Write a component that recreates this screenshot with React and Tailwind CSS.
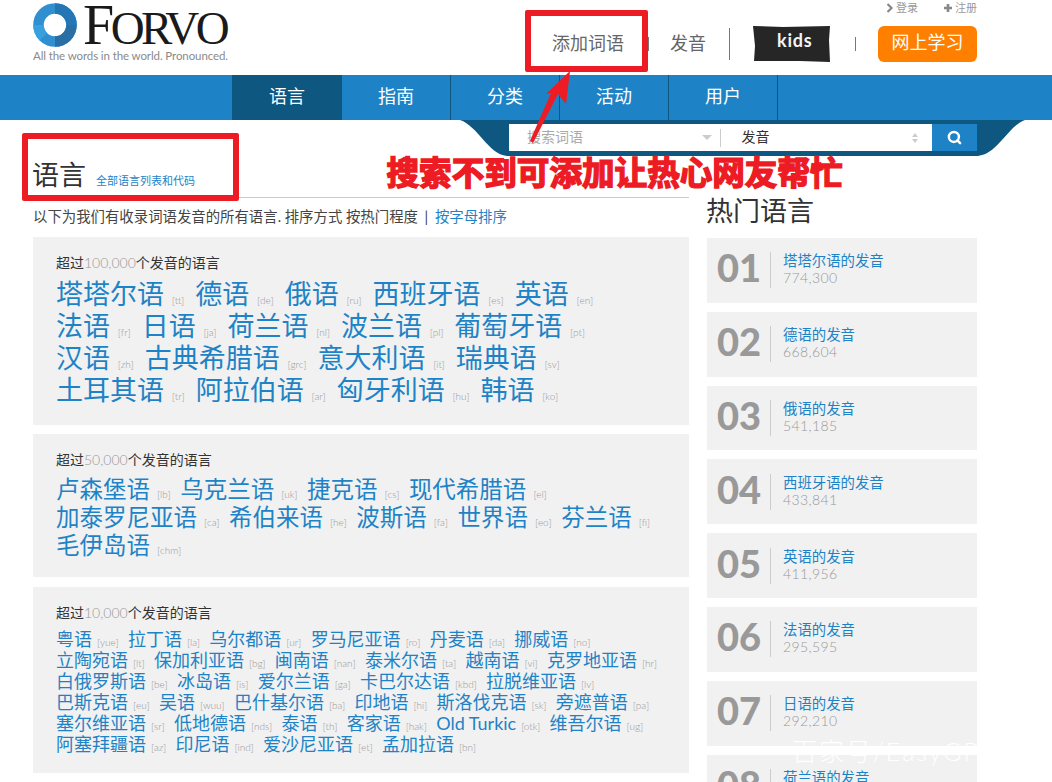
import { Search } from "lucide-react";

const font = "font-['Lato','Noto_Sans_CJK_SC',sans-serif]";

const navItems = ["语言", "指南", "分类", "活动", "用户"];

const bigRows = [
    [["塔塔尔语", "tt"], ["德语", "de"], ["俄语", "ru"], ["西班牙语", "es"], ["英语", "en"]],
    [["法语", "fr"], ["日语", "ja"], ["荷兰语", "nl"], ["波兰语", "pl"], ["葡萄牙语", "pt"]],
    [["汉语", "zh"], ["古典希腊语", "grc"], ["意大利语", "it"], ["瑞典语", "sv"]],
    [["土耳其语", "tr"], ["阿拉伯语", "ar"], ["匈牙利语", "hu"], ["韩语", "ko"]],
];

const midRows = [
    [["卢森堡语", "lb"], ["乌克兰语", "uk"], ["捷克语", "cs"], ["现代希腊语", "el"]],
    [["加泰罗尼亚语", "ca"], ["希伯来语", "he"], ["波斯语", "fa"], ["世界语", "eo"], ["芬兰语", "fi"]],
    [["毛伊岛语", "chm"]],
];

const smallRows = [
    [["粤语", "yue"], ["拉丁语", "la"], ["乌尔都语", "ur"], ["罗马尼亚语", "ro"], ["丹麦语", "da"], ["挪威语", "no"]],
    [["立陶宛语", "lt"], ["保加利亚语", "bg"], ["闽南语", "nan"], ["泰米尔语", "ta"], ["越南语", "vi"], ["克罗地亚语", "hr"]],
    [["白俄罗斯语", "be"], ["冰岛语", "is"], ["爱尔兰语", "ga"], ["卡巴尔达语", "kbd"], ["拉脱维亚语", "lv"]],
    [["巴斯克语", "eu"], ["吴语", "wuu"], ["巴什基尔语", "ba"], ["印地语", "hi"], ["斯洛伐克语", "sk"], ["旁遮普语", "pa"]],
    [["塞尔维亚语", "sr"], ["低地德语", "nds"], ["泰语", "th"], ["客家语", "hak"], ["Old Turkic", "otk"], ["维吾尔语", "ug"]],
    [["阿塞拜疆语", "az"], ["印尼语", "ind"], ["爱沙尼亚语", "et"], ["孟加拉语", "bn"]],
];

const popular = [
    ["01", "塔塔尔语的发音", "774,300"],
    ["02", "德语的发音", "668,604"],
    ["03", "俄语的发音", "541,185"],
    ["04", "西班牙语的发音", "433,841"],
    ["05", "英语的发音", "411,956"],
    ["06", "法语的发音", "295,595"],
    ["07", "日语的发音", "292,210"],
    ["08", "荷兰语的发音", "262,036"],
];

function LangPanel({ count, rows, textClass, rowClass, codeClass, gapClass, panelClass, listClass }) {
    return (
        <div className={`bg-[#f1f1f1] pl-[23px] ${panelClass}`}>
            <p className="text-[14px] leading-[20px] text-[#333]">
                超过<span className="font-light text-[#999]">{count}</span>个发音的语言
            </p>
            <div className={listClass}>
                {rows.map((row, i) => (
                    <div key={i} className={`flex items-baseline ${rowClass} ${gapClass}`}>
                        {row.map(([name, code]) => (
                            <span key={code} className="whitespace-nowrap">
                                <span className={`text-[#1e83c6] ${textClass}`}>{name}</span>
                                <span className={`font-light text-[#999] ${codeClass}`}>[{code}]</span>
                            </span>
                        ))}
                    </div>
                ))}
            </div>
        </div>
    );
}

function Logo() {
    return (
        <div className="pl-[33px] pt-[3px]">
            <div className="flex items-start">
                <svg width="44" height="44" viewBox="0 0 44 44">
                    <circle cx="22" cy="22" r="16.5" fill="none" stroke="#2f8fd0" strokeWidth="10.5" />
                    <path d="M22 5.5A16.5 16.5 0 0 1 38.5 22" fill="none" stroke="#2476b4" strokeWidth="10.5" />
                    <path d="M38.5 22A16.5 16.5 0 0 1 22 38.5" fill="none" stroke="#2a6ea6" strokeWidth="10.5" />
                    <path d="M10.3 33.7A16.5 16.5 0 0 1 5.5 22" fill="none" stroke="#39a0de" strokeWidth="10.5" />
                </svg>
                <div className="ml-[6px] flex h-[44px] items-baseline font-['Liberation_Serif',serif] leading-[44px] tracking-[-3.5px] text-[#1a1a1a]">
                    <span className="text-[56px]">F</span>
                    <span className="text-[47px]">ORVO</span>
                </div>
            </div>
            <p className="mt-[2px] text-[11.5px] leading-[14px] tracking-[-0.1px] text-[#8a8a8a]">All the words in the world. Pronounced.</p>
        </div>
    );
}

function Header() {
    return (
        <header className="flex h-[75px] justify-between">
            <Logo />
            <div className="flex flex-col items-end pr-[75px]">
                <div className="flex h-[25px] items-start gap-[25px] pt-[1px] text-[11px] leading-[14px] text-[#999]">
                    <span className="flex items-center gap-[2px]">
                        <svg width="8" height="10" viewBox="0 0 8 10"><path d="M1.5 1l4 4-4 4" fill="none" stroke="#888" strokeWidth="2.2" /></svg>
                        登录
                    </span>
                    <span className="flex items-center gap-[2px]">
                        <svg width="10" height="10" viewBox="0 0 10 10"><path d="M5 1v8M1 5h8" fill="none" stroke="#888" strokeWidth="2.6" /></svg>
                        注册
                    </span>
                </div>
                <div className="flex items-center text-[18px] text-[#666]">
                    <span className="mb-[2px]">添加词语</span>
                    <span className="ml-[24px] h-[14px] w-px bg-[#777]" />
                    <span className="mb-[2px] ml-[21px]">发音</span>
                    <span className="ml-[23px] h-[32px] w-px bg-[#777]" />
                    <svg className="ml-[22px]" width="79" height="38" viewBox="0 0 79 38">
                        <path d="M1 1l30 1 47-1-1 14 1 22-30-1-46 0 1-15z" fill="#262626" />
                        <text x="25" y="22" fill="#f4f4f4" fontSize="18" fontWeight="700" fontFamily="Lato,sans-serif" letterSpacing="0.8">kids</text>
                    </svg>
                    <span className="ml-[24px] h-[14px] w-px bg-[#777]" />
                    <span className="ml-[22px] flex h-[36px] w-[99px] items-center justify-center rounded-[6px] bg-[#ff8000] pb-[3px] text-white">网上学习</span>
                </div>
            </div>
        </header>
    );
}

function Nav() {
    return (
        <nav className="relative flex h-[45px] bg-[#1e83c6] pl-[232px]">
            {navItems.map((item, i) => (
                <div key={item} className={`flex items-center justify-center pb-[2px] text-[18px] text-white ${i === 0 ? "w-[110px] bg-[#0d5781]" : "w-[109px] border-r border-[#0d5781]"}`}>
                    {item}
                </div>
            ))}
            <div className="absolute right-[27px] top-full h-[36px] w-[565px]">
                <svg className="absolute inset-0" width="565" height="36" viewBox="0 0 565 36">
                    <path d="M0 0H565C548 6 538 34 518 36H47C28 34 18 6 0 0Z" fill="#0d5781" />
                </svg>
                <div className="absolute left-[49px] top-[4px] flex h-[27px] w-[468px] items-center bg-white text-[14px]">
                    <div className="flex h-[27px] w-[211px] items-center justify-between pb-[3px] pl-[18px] pr-[8px] text-[#aaa]">
                        搜索词语
                        <span className="mt-[3px] h-0 w-0 border-x-[5px] border-t-[5px] border-x-transparent border-t-[#ccc]" />
                    </div>
                    <span className="h-[18px] w-px bg-[#ccc]" />
                    <div className="flex h-[27px] w-[212px] items-center justify-between pb-[3px] pl-[21px] pr-[14px] text-[#333]">
                        发音
                        <span className="mt-[3px] flex flex-col gap-[2px]">
                            <span className="h-0 w-0 border-x-[3px] border-b-[4px] border-x-transparent border-b-[#ccc]" />
                            <span className="h-0 w-0 border-x-[3px] border-t-[4px] border-x-transparent border-t-[#ccc]" />
                        </span>
                    </div>
                    <div className="flex h-[27px] w-[45px] items-center justify-center bg-[#1e83c6]">
                        <Search size={15} strokeWidth={4} color="#fff" />
                    </div>
                </div>
            </div>
        </nav>
    );
}

function Popular() {
    return (
        <aside className="ml-[18px] w-[270px]">
            <h2 className="-ml-[1px] mt-[72px] h-[46px] text-[27px] leading-[38px] text-[#333]">热门语言</h2>
            <div className="flex flex-col gap-[9px]">
                {popular.map(([num, title, count]) => (
                    <div key={num} className="flex h-[64.8px] shrink-0 items-center bg-[#f1f1f1] pl-[10px]">
                        <span className="w-[53px] pb-[6px] text-[38px] font-black leading-none text-[#999]">{num}</span>
                        <span className="h-[36px] w-px bg-[#ccc]" />
                        <div className="ml-[12px] pb-[2px]">
                            <p className="text-[14.4px] leading-[17px] text-[#1e83c6]">{title}</p>
                            <p className="text-[14px] font-light leading-[17px] tracking-[0.4px] text-[#999]">{count}</p>
                        </div>
                    </div>
                ))}
            </div>
        </aside>
    );
}

export default function App() {
    return (
        <div className={`relative h-screen overflow-hidden bg-white ${font}`}>
            <Header />
            <Nav />
            <main className="flex pl-[33px]">
                <section className="w-[656px]">
                    <div className="flex h-[78px] items-end border-b border-[#ccc] pb-[3px]">
                        <h1 className="-ml-[1px] text-[27px] leading-[38px] text-[#333]">语言</h1>
                        <a className="mb-[6px] ml-[10px] text-[11px] leading-[14px] text-[#1e83c6]">全部语言列表和代码</a>
                    </div>
                    <p className="mt-[9px] h-[30px] whitespace-nowrap text-[14.4px] leading-[20px] text-[#444]">
                        以下为我们有收录词语发音的所有语言. 排序方式 按热门程度 <span className="mx-[3px]">|</span> <span className="text-[#1e83c6]">按字母排序</span>
                    </p>
                    <LangPanel count="100,000" rows={bigRows} textClass="text-[27px]" rowClass="h-[32px]" codeClass="ml-[7.75px] text-[10px]" gapClass="gap-[11px]" panelClass="h-[188px] pt-[16px]" listClass="mt-[1px]" />
                    <LangPanel count="50,000" rows={midRows} textClass="text-[23.5px]" rowClass="h-[28px]" codeClass="ml-[7px] text-[10px]" gapClass="gap-[9.5px]" panelClass="mt-[9px] h-[143px] pt-[16px]" listClass="mt-[2px]" />
                    <LangPanel count="10,000" rows={smallRows} textClass="text-[18px]" rowClass="h-[21px]" codeClass="ml-[5px] text-[10px]" gapClass="gap-[9.3px]" panelClass="mt-[10px] h-[186px] pt-[16px]" listClass="mt-[3px]" />
                </section>
                <Popular />
            </main>

            {/* annotations drawn over the page */}
            <div className="absolute left-[22px] top-[133px] h-[68px] w-[217px] rounded-[2px] border-[6px] border-[#ed1c24]" />
            <div className="absolute left-[525px] top-[10px] h-[62px] w-[123px] rounded-[2px] border-[6px] border-[#ed1c24]" />
            <svg className="absolute left-[525px] top-[68px]" width="50" height="80" viewBox="0 0 50 80">
                <path d="M45 3L41 36L33 26L8 75L5 73L26 25L21 26Z" fill="#ed1c24" />
            </svg>
            <p className="absolute left-[386.5px] top-[150px] whitespace-nowrap text-[32.6px] font-bold leading-[46px] text-[#ed1c24] [-webkit-text-stroke:1.5px_#ed1c24]">搜索不到可添加让热心网友帮忙</p>
            <p className="absolute left-[792px] top-[735px] whitespace-nowrap text-[25px] font-light leading-[32px] tracking-[2px] text-white">百家号/EasyGPT</p>
        </div>
    );
}
